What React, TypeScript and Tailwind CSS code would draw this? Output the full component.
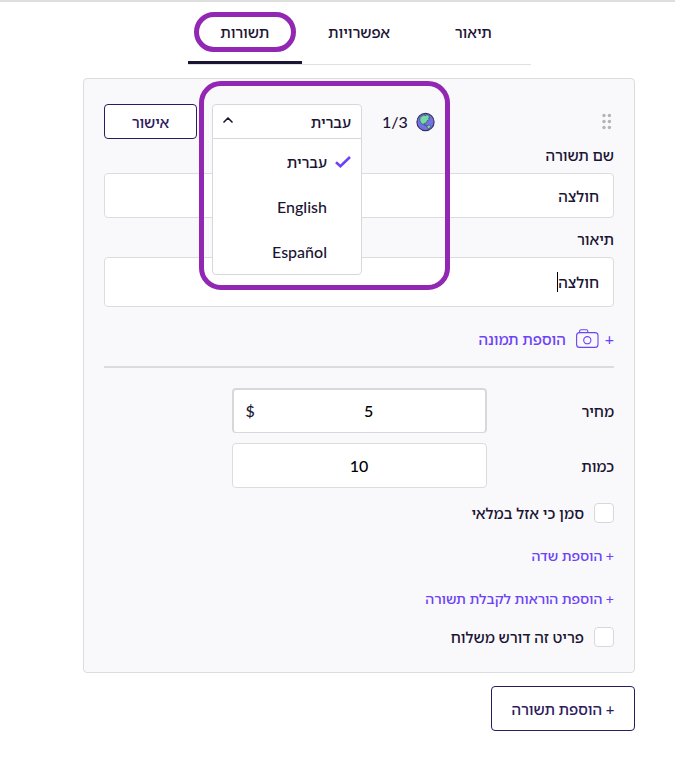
import { useState } from "react";
import { ChevronUp } from "lucide-react";

const languages = ["עברית", "English", "Español"];

function Globe() {
  return (
    <svg width="20" height="20" viewBox="0 0 20 20" aria-hidden="true">
      <circle cx="9.5" cy="10" r="8.6" fill="#7272e3" stroke="#34315f" strokeWidth="1.1" />
      <path
        d="M4.1 5.2 7.5 3.2l2.4.5.6-1 2 .6 1.3 2.2-1.4.4 1 1.4-2.3 1.4-.7 2.2-2 .3-1.3 1.4-1.5-1-1.7-2.6z"
        fill="#74dca0"
        stroke="#34315f"
        strokeWidth=".5"
      />
      <path d="m7.7 12.4 3 1.6" fill="none" stroke="#34315f" strokeWidth=".8" />
      <path
        d="m11 13.6 2.4-.5 1.2 1.5-1.5 2.2-1.8-.8z"
        fill="#74dca0"
        stroke="#34315f"
        strokeWidth=".5"
      />
    </svg>
  );
}

function DragHandle() {
  return (
    <svg width="10" height="18" viewBox="0 0 10 18" fill="#b4b4b4" aria-hidden="true">
      <circle cx="2" cy="2.5" r="1.7" />
      <circle cx="7.4" cy="2.5" r="1.7" />
      <circle cx="2" cy="8.5" r="1.7" />
      <circle cx="7.4" cy="8.5" r="1.7" />
      <circle cx="2" cy="14.5" r="1.7" />
      <circle cx="7.4" cy="14.5" r="1.7" />
    </svg>
  );
}

function Camera() {
  return (
    <svg width="23" height="20" viewBox="0 0 23 20" fill="none" stroke="#6c43f5" strokeWidth="1.1" aria-hidden="true">
      <rect x=".6" y="3.6" width="21.4" height="14.8" rx="3" />
      <path d="M3.6 3.6V2.2C3.6 1.2 4.2.7 5 .7h5.4c.9 0 1.4.5 1.4 1.5v1.4" />
      <circle cx="11.3" cy="11.2" r="3.6" />
    </svg>
  );
}

function Tick() {
  return (
    <svg width="16" height="12" viewBox="0 0 16 12" fill="none" stroke="#6c43f5" strokeWidth="2.6" aria-hidden="true">
      <path d="m1 6.2 4.4 4L15 1" />
    </svg>
  );
}

function CheckRow({ id, label }: { id: string; label: string }) {
  return (
    <div className="flex h-5 items-center gap-2.5">
      <input
        id={id}
        type="checkbox"
        className="size-5 appearance-none rounded border border-[#d8d8dc] bg-white checked:bg-[#6c43f5]"
      />
      <label htmlFor={id}>{label}</label>
    </div>
  );
}

export default function App() {
  const [language, setLanguage] = useState(languages[0]);
  const [name, setName] = useState("חולצה");
  const [description, setDescription] = useState("חולצה");
  const [price, setPrice] = useState("5");
  const [quantity, setQuantity] = useState("10");

  return (
    <div
      dir="rtl"
      className="border-t-2 border-[#dedede] bg-white pt-2.5 pr-10 pb-8 pl-[83px] font-['Lato','Noto_Sans_Hebrew','Open_Sans',sans-serif] text-[15px] leading-5 font-medium text-[#1b1533]"
    >
      <nav className="mx-auto grid w-[343px] max-w-full grid-cols-3 border-b border-[#e0e0e0]">
        <button className="flex h-[52px] items-start justify-center pt-2.5">תיאור</button>
        <button className="flex h-[52px] items-start justify-center pt-2.5">אפשרויות</button>
        <button className="flex h-[52px] items-start justify-center border-b-3 border-[#1b1533]">
          <span className="flex h-10 w-[102px] items-center justify-center rounded-full border-5 border-[#9127b3]">
            תשורות
          </span>
        </button>
      </nav>

      <section className="mt-[13px] rounded border border-[#dcdcdf] bg-[#f9f9fc] px-5 py-[25px]">
        <div className="flex h-[35px] items-center justify-between">
          <button aria-label="גרירה" className="px-0.5">
            <DragHandle />
          </button>
          <div className="flex items-center gap-[15px]">
            <div className="relative flex items-center">
              <Globe />
              <span className="mr-2 ml-5 text-base">1/3</span>
              <div className="relative w-[150px]">
                <select
                  aria-label="שפה"
                  value={language}
                  onChange={(e) => setLanguage(e.target.value)}
                  className="block h-[35px] w-full appearance-none rounded-t border border-[#d8d8dc] bg-white px-2.5"
                >
                  {languages.map((l) => (
                    <option key={l}>{l}</option>
                  ))}
                </select>
                <ChevronUp
                  size={16}
                  strokeWidth={2.5}
                  className="pointer-events-none absolute top-2 left-2"
                />
                <ul className="absolute top-[34px] z-10 w-full rounded-b border border-[#d8d8dc] bg-white">
                  {languages.map((l) => (
                    <li key={l}>
                      <button
                        onClick={() => setLanguage(l)}
                        className={`flex h-[45px] w-full items-center gap-2 pr-2.5 ${
                          l === "עברית" ? "text-[15px]" : "text-base"
                        }`}
                      >
                        <span className="w-4">{l === language && <Tick />}</span>
                        {l}
                      </button>
                    </li>
                  ))}
                </ul>
              </div>
              <div className="pointer-events-none absolute -top-[23px] -right-3.5 -left-[13px] z-20 h-[209px] rounded-[22px] border-5 border-[#9127b3]" />
            </div>
            <button className="h-[35px] w-[93px] rounded border border-[#2d1b5e] bg-white text-[#2d1b5e]">
              אישור
            </button>
          </div>
        </div>

        <label htmlFor="name" className="mt-1.5 block">
          שם תשורה
        </label>
        <input
          id="name"
          value={name}
          onChange={(e) => setName(e.target.value)}
          className="mt-2 block h-[45px] w-full rounded border border-[#dcdcdf] bg-white px-3.5"
        />

        <label htmlFor="description" className="mt-[11px] block">
          תיאור
        </label>
        <div className="mt-2 flex h-[50px] items-center rounded border border-[#dcdcdf] bg-white px-3.5">
          <textarea
            id="description"
            rows={1}
            value={description}
            onChange={(e) => setDescription(e.target.value)}
            className="field-sizing-content resize-none overflow-hidden outline-none"
          />
          <span className="h-5 w-px bg-black" />
        </div>

        <button className="mt-[22px] flex h-5 items-center text-[#6c43f5]">
          <span className="text-base">+</span>
          <span className="mr-1.5 ml-2.5">
            <Camera />
          </span>
          הוספת תמונה
        </button>
        <hr className="mt-[17px] border-t-2 border-[#dcdcdf]" />

        <div className="mt-5 flex items-center">
          <label htmlFor="price" className="w-1/4">
            מחיר
          </label>
          <div className="flex h-[45px] w-1/2 items-center rounded border-2 border-b border-[#d8d8dc] bg-white pr-0.5 pl-3 text-base">
            <input
              id="price"
              value={price}
              onChange={(e) => setPrice(e.target.value)}
              className="min-w-0 flex-1 text-center text-black outline-none"
            />
            <span>$</span>
          </div>
        </div>
        <div className="mt-2.5 flex items-center">
          <label htmlFor="quantity" className="w-1/4">
            כמות
          </label>
          <input
            id="quantity"
            value={quantity}
            onChange={(e) => setQuantity(e.target.value)}
            className="h-[45px] w-1/2 rounded border border-[#dcdcdf] bg-white text-center text-base text-black"
          />
        </div>

        <div className="mt-[15px] flex flex-col items-start">
          <CheckRow id="sold-out" label="סמן כי אזל במלאי" />
          <button className="mt-[23px] text-sm leading-5 text-[#6c43f5]">+ הוספת שדה</button>
          <button className="mt-[23px] mb-[18px] text-sm leading-5 text-[#6c43f5]">
            + הוספת הוראות לקבלת תשורה
          </button>
          <CheckRow id="shipping" label="פריט זה דורש משלוח" />
        </div>
      </section>

      <button className="mt-[13px] h-[45px] w-36 rounded border border-[#2d1b5e] bg-white text-[#2d1b5e]">
        + הוספת תשורה
      </button>
    </div>
  );
}
